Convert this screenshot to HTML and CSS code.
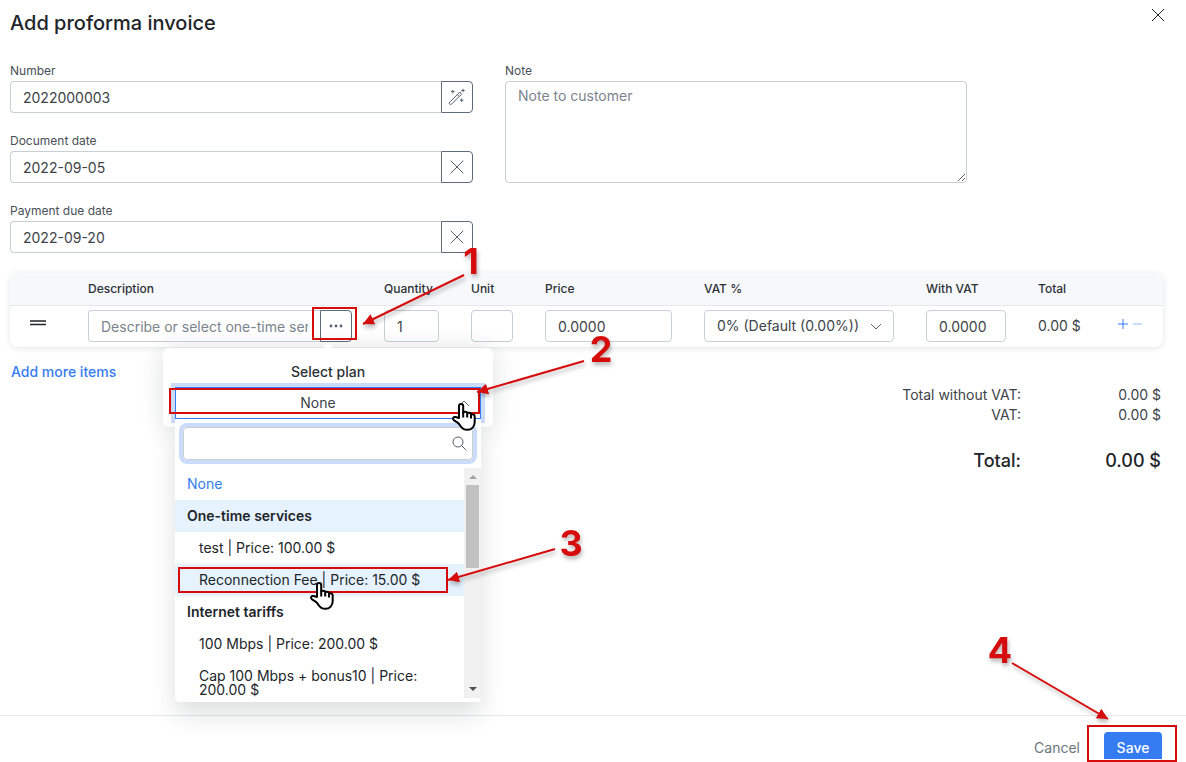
FILE: index.html
```html
<!DOCTYPE html>
<html lang="en">
<head>
<meta charset="utf-8">
<title>Add proforma invoice</title>
<link rel="stylesheet" href="styles.css">
</head>
<body>
<main class="dialog">
  <header class="dialog-header">
    <h1 class="title">Add proforma invoice</h1>
    <button class="close" type="button" aria-label="Close">
      <svg width="14" height="14" viewBox="0 0 14 14"><path d="M1 1l12 12M13 1L1 13"/></svg>
    </button>
  </header>

  <form class="content">
    <div class="form-grid">
      <div class="fields">
        <div class="field">
          <label for="number">Number</label>
          <div class="group">
            <input class="control" id="number" type="text" value="2022000003">
            <button class="addon" type="button" aria-label="Generate number">
              <svg width="18" height="18" viewBox="0 0 18 18">
                <path d="M1.7 14.2L11 4.9a1.3 1.3 0 0 1 1.9 1.9L3.6 16.1a1.3 1.3 0 0 1-1.9-1.9zM9.3 6.6l1.9 1.9M4.8 1.8v3.6M3 3.6h3.6M15 .8v3.4M13.3 2.5h3.4M13.6 10.4V14M11.8 12.2h3.6"/>
              </svg>
            </button>
          </div>
        </div>
        <div class="field">
          <label for="doc-date">Document date</label>
          <div class="group">
            <input class="control" id="doc-date" type="text" value="2022-09-05">
            <button class="addon" type="button" aria-label="Clear document date">
              <svg width="14" height="14" viewBox="0 0 14 14"><path d="M.7.7l12.6 12.6M13.3.7L.7 13.3"/></svg>
            </button>
          </div>
        </div>
        <div class="field">
          <label for="due-date">Payment due date</label>
          <div class="group">
            <input class="control" id="due-date" type="text" value="2022-09-20">
            <button class="addon" type="button" aria-label="Clear payment due date">
              <svg width="14" height="14" viewBox="0 0 14 14"><path d="M.7.7l12.6 12.6M13.3.7L.7 13.3"/></svg>
            </button>
          </div>
        </div>
      </div>
      <div class="field">
        <label for="note">Note</label>
        <textarea class="control note" id="note" placeholder="Note to customer"></textarea>
      </div>
    </div>

    <table class="items">
      <colgroup>
        <col class="col-handle"><col><col class="col-qty"><col class="col-unit"><col class="col-price">
        <col class="col-vat"><col class="col-with"><col class="col-total"><col class="col-actions">
      </colgroup>
      <thead>
        <tr>
          <th></th>
          <th scope="col">Description</th>
          <th scope="col">Quantity</th>
          <th scope="col">Unit</th>
          <th scope="col">Price</th>
          <th scope="col">VAT %</th>
          <th scope="col">With VAT</th>
          <th scope="col">Total</th>
          <th></th>
        </tr>
      </thead>
      <tbody>
        <tr>
          <td class="handle"><svg width="18" height="6" viewBox="0 0 18 6"><path d="M1 1h16M1 4.5h16"/></svg></td>
          <td>
            <div class="group picker">
              <input class="control" type="text" aria-label="Description" placeholder="Describe or select one-time service">
              <button class="addon" type="button" aria-label="Select plan">
                <svg class="dots" width="14" height="4" viewBox="0 0 14 4"><circle cx="2" cy="2" r="1.4"/><circle cx="7" cy="2" r="1.4"/><circle cx="12" cy="2" r="1.4"/></svg>
              </button>
              <div class="popover">
                <div class="popover-title" id="plan-label">Select plan</div>
                <button class="plan" type="button" aria-haspopup="listbox" aria-expanded="true" aria-labelledby="plan-label plan-value">
                  <span class="plan-value" id="plan-value">None</span>
                  <svg width="12" height="7" viewBox="0 0 12 7"><path d="M1 6l5-5 5 5"/></svg>
                </button>
                <div class="dropdown">
                  <div class="search">
                    <input type="text" aria-label="Search plans">
                    <svg width="15" height="15" viewBox="0 0 15 15"><circle cx="6" cy="6" r="5"/><path d="M9.6 9.6l4.6 4.6"/></svg>
                  </div>
                  <div class="list">
                    <ul class="options" role="listbox" aria-labelledby="plan-label">
                      <li class="option chosen" role="option">None</li>
                      <li class="option heading lit">One-time services</li>
                      <li class="option child" role="option">test | Price: 100.00 $</li>
                      <li class="option child lit" role="option">Reconnection Fee | Price: 15.00 $</li>
                      <li class="option heading">Internet tariffs</li>
                      <li class="option child" role="option">100 Mbps | Price: 200.00 $</li>
                      <li class="option child" role="option">Cap 100 Mbps + bonus10 | Price: 200.00 $</li>
                    </ul>
                    <div class="scrollbar">
                      <svg class="arrow up" width="8" height="4" viewBox="0 0 8 4"><path d="M0 4l4-4 4 4z"/></svg>
                      <div class="thumb"></div>
                      <svg class="arrow" width="8" height="4" viewBox="0 0 8 4"><path d="M0 0h8L4 4z"/></svg>
                    </div>
                  </div>
                </div>
              </div>
            </div>
          </td>
          <td><input class="control" type="text" aria-label="Quantity" value="1"></td>
          <td><input class="control" type="text" aria-label="Unit"></td>
          <td><input class="control" type="text" aria-label="Price" value="0.0000"></td>
          <td>
            <div class="select">
              <select class="control" aria-label="VAT %"><option>0% (Default (0.00%))</option></select>
              <svg width="12" height="7" viewBox="0 0 12 7"><path d="M1 1l5 5 5-5"/></svg>
            </div>
          </td>
          <td><input class="control" type="text" aria-label="With VAT" value="0.0000"></td>
          <td>0.00 $</td>
          <td>
            <div class="actions">
              <button type="button" aria-label="Add row"><svg width="10" height="10" viewBox="0 0 10 10"><path d="M5 0v10M0 5h10"/></svg></button>
              <button class="faded" type="button" aria-label="Remove row"><svg width="10" height="10" viewBox="0 0 10 10"><path d="M0 5h9"/></svg></button>
            </div>
          </td>
        </tr>
      </tbody>
    </table>

    <div class="summary">
      <a class="more" href="#">Add more items</a>
      <dl class="totals">
        <dt>Total without VAT:</dt><dd>0.00 $</dd>
        <dt>VAT:</dt><dd>0.00 $</dd>
        <dt class="grand">Total:</dt><dd class="grand">0.00 $</dd>
      </dl>
    </div>
  </form>

  <footer class="dialog-footer">
    <button class="cancel" type="button">Cancel</button>
    <button class="save" type="button">Save</button>
  </footer>
</main>

<svg class="guide" width="1186" height="762" viewBox="0 0 1186 762" aria-hidden="true">
  <defs>
    <marker id="tip" markerUnits="userSpaceOnUse" markerWidth="12" markerHeight="12" refX="11" refY="5.5" orient="auto"><path class="tip" d="M0 0l11 5.500L0 11z"/></marker>
    <g id="hand">
      <path class="hand" d="M7 16V4a2 2 0 0 1 4.200 0V10c2.800-.4 4 0 4.300 1 2-.4 3.300 0 3.600 1.200 2-.2 3.600.6 3.600 2.200V20c0 4.500-3 7.800-7.200 7.800-3.600 0-5.600-1.500-7.200-4.100l-2-2.600-4.600-3c-1.600-1.500-.2-3.600 1.900-3.100z"/>
      <path class="knuckles" d="M11.200 9v6.500M15.200 11v4.500M19 12v4.500"/>
    </g>
  </defs>
  <g class="boxes">
    <rect x="313" y="308" width="43" height="31"/>
    <rect x="170" y="389" width="309" height="24"/>
    <rect x="179" y="568" width="268" height="24"/>
    <rect x="1088" y="726" width="88" height="35"/>
  </g>
  <g class="arrows">
    <path d="M464 275L363 324" marker-end="url(#tip)"/>
    <path d="M584 361L477 392" marker-end="url(#tip)"/>
    <path d="M555 549L448 580" marker-end="url(#tip)"/>
    <path d="M1012 663L1108 719" marker-end="url(#tip)"/>
    <text x="471" y="274">1</text>
    <text x="601" y="362">2</text>
    <text x="571" y="556">3</text>
    <text x="1000" y="663">4</text>
  </g>
  <use href="#hand" x="452" y="402"/>
  <use href="#hand" x="310" y="581"/>
</svg>
</body>
</html>
```
FILE: styles.css
```css
* { box-sizing: border-box; }

body {
  margin: 0;
  background: #fff;
  color: #3d4348;
  font: 14px/20px Inter, "Liberation Sans", sans-serif;
}

button, input, select, textarea { font: inherit; color: inherit; margin: 0; }
button { background: none; border: 0; padding: 0; }
svg { display: block; fill: none; stroke: #55616e; }

.dialog { position: relative; min-height: 100vh; display: flex; flex-direction: column; }

.dialog-header { display: flex; justify-content: space-between; padding: 8px 21px 0 10px; }
.title { margin: 0; font-size: 20px; line-height: 30px; font-weight: 500; color: #212529; }
.close { align-self: flex-start; }
.close svg { stroke: #212529; }

.content { flex: 1; padding: 24px 23px 0 10px; }

.form-grid { display: grid; grid-template-columns: 463fr 462fr 164fr; gap: 32px; }
.fields { display: flex; flex-direction: column; gap: 19px; }
.field label { display: block; padding-bottom: 2px; font-size: 12px; line-height: 17px; color: #495057; }

.control {
  display: block;
  width: 100%;
  min-width: 0;
  height: 32px;
  padding: 0 12px;
  border: 1px solid #c9cfd6;
  border-radius: 4px;
  background: #fff;
  outline: 0;
}
.control::placeholder { color: #7b848c; opacity: 1; }
.note { height: 102px; padding: 4px 12px; resize: vertical; }

.group { display: flex; }
.group .control { flex: 1; border-right: 0; border-radius: 4px 0 0 4px; }
.addon {
  display: flex;
  align-items: center;
  justify-content: center;
  width: 32px;
  height: 32px;
  border: 1px solid #5f6b78;
  border-radius: 0 4px 4px 0;
  background: #fff;
}
.dots { fill: #55616e; stroke: none; }

.items {
  width: 100%;
  margin-top: 20px;
  table-layout: fixed;
  border-collapse: separate;
  border-spacing: 0;
  border-radius: 8px;
  box-shadow: 0 1px 6px rgba(33, 37, 41, .13);
}
.col-handle, .col-actions { width: 62px; }
.col-qty { width: 87px; }
.col-unit { width: 74px; }
.col-price { width: 159px; }
.col-vat { width: 222px; }
.col-with { width: 112px; }
.col-total { width: 79px; }

.items th {
  height: 33px;
  padding: 0 16px;
  background: #f7f8fc;
  border-bottom: 1px solid #e6e8ec;
  font-size: 12px;
  font-weight: 500;
  line-height: 16px;
  text-align: left;
  color: #2b3035;
}
.items th:first-child { border-top-left-radius: 8px; }
.items th:last-child { border-top-right-radius: 8px; }
.items td { height: 41px; padding: 4px 16px 5px; }
.items .handle { padding: 0 19px 8px; }
.handle svg { stroke: #212529; stroke-width: 1.5; }

.select { position: relative; }
.select select { appearance: none; }
.select svg { position: absolute; right: 12px; top: 13px; }

.actions { display: flex; gap: 5px; padding: 0 0 4px 1px; }
.actions svg { stroke: #357bf2; }
.actions .faded { opacity: .5; }

.picker { position: relative; }
.popover {
  position: absolute;
  top: 38px;
  right: -141px;
  z-index: 1;
  width: 330px;
  padding: 14px 12px 8px;
  border-radius: 6px;
  background: #fff;
  box-shadow: 0 2px 24px rgba(33, 37, 41, .15);
}
.popover::before {
  content: "";
  position: absolute;
  top: -5px;
  left: 159px;
  border: 6px solid transparent;
  border-top: 0;
  border-bottom-color: #fff;
}
.popover-title { padding-bottom: 5px; text-align: center; font-weight: 500; color: #2b3035; }
.plan {
  display: flex;
  align-items: center;
  width: 100%;
  height: 32px;
  padding-right: 10px;
  border: 1px solid #357bf2;
  box-shadow: 0 0 0 4px #cbdcfb;
}
.plan-value { flex: 1; padding-left: 2px; }

.dropdown {
  position: absolute;
  top: 71px;
  left: 12px;
  right: 12px;
  padding: 8px 0 4px;
  border-radius: 0 0 4px 4px;
  background: #fff;
  box-shadow: 0 12px 24px rgba(33, 37, 41, .15);
}
.search {
  display: flex;
  align-items: center;
  margin: 0 8px 8px;
  padding-right: 5px;
  border: 1px solid #c9cfd6;
  border-radius: 4px;
  box-shadow: 0 0 0 4px #cbdcfb;
}
.search input { flex: 1; min-width: 0; height: 31px; border: 0; outline: 0; background: none; }

.list { display: flex; height: 230px; }
.options { flex: 1; margin: 0; padding: 0; list-style: none; overflow: hidden; line-height: 14px; color: #212529; }
.option { padding: 9px 12px; }
.child { padding-left: 24px; }
.heading { font-weight: 600; }
.chosen { color: #357bf2; }
.lit { background: #e6f2fe; }

.scrollbar { display: flex; flex-direction: column; align-items: center; width: 17px; padding: 7px 0; background: #f1f1f1; }
.thumb { width: 13px; height: 83px; margin: 6px 0 auto; background: #c1c1c1; }
.arrow { fill: #505050; stroke: none; }
.up { fill: #a3a3a3; }

.summary { display: flex; justify-content: space-between; align-items: flex-start; padding: 15px 2px 0 1px; }
.more { color: #357bf2; font-weight: 500; text-decoration: none; }
.totals { display: grid; grid-template-columns: auto 140px; margin: 0; padding-top: 23px; text-align: right; }
.totals dd { margin: 0; }
.totals .grand { padding-top: 24px; font-size: 18px; line-height: 24px; font-weight: 500; color: #212529; }

.dialog-footer {
  display: flex;
  justify-content: flex-end;
  gap: 24px;
  height: 47px;
  padding: 16px 24px 0;
  border-top: 1px solid #e6e8ec;
}
.cancel { height: 32px; color: #6c757d; }
.save { width: 58px; height: 27px; padding-top: 4px; border-radius: 4px 4px 0 0; background: #357bf2; color: #fff; font-weight: 500; }

.guide { position: absolute; top: 0; left: 0; z-index: 2; pointer-events: none; }
.boxes { stroke: #d60b0b; stroke-width: 2; }
.arrows { stroke: #d60b0b; stroke-width: 2; filter: drop-shadow(1px 3px 2px rgba(0, 0, 0, .3)); }
.arrows text, .tip { fill: #d60b0b; stroke: none; }
.arrows text { font-size: 36px; font-weight: 700; text-anchor: middle; }
.hand { fill: #fff; stroke: #000; stroke-width: 2; stroke-linejoin: round; }
.knuckles { stroke: #000; stroke-width: 2; }
```
